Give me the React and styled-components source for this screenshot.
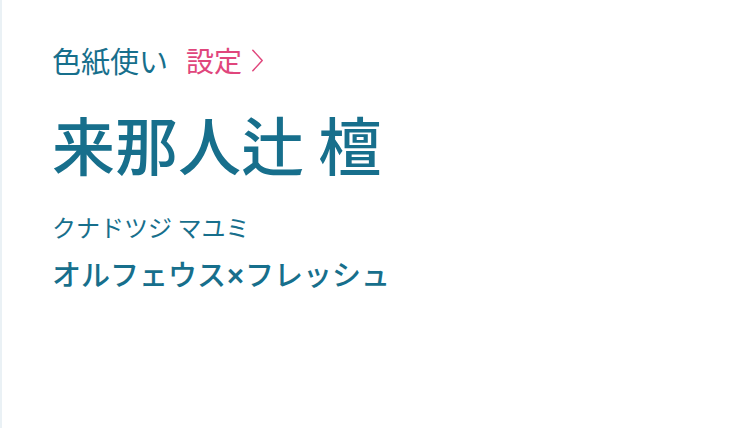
import styled, { createGlobalStyle } from "styled-components";

const GlobalStyle = createGlobalStyle`
  html, body {
    margin: 0;
    padding: 0;
    background: #ffffff;
  }
  body {
    font-family: "Noto Sans CJK JP", "Noto Sans", sans-serif;
  }
`;

const TEAL = "#176f8c";
const PINK = "#e0467c";

export default function App() {
  return (
    <>
      <GlobalStyle />
      <Page>
        <Panel>
          <TopRow>
            <Label>色紙使い</Label>
            <SettingsLink href="#">
              設定
              <Chevron viewBox="0 0 16 26">
                <path d="M3 2 L13 13 L3 24" />
              </Chevron>
            </SettingsLink>
          </TopRow>
          <Name>来那人辻 檀</Name>
          <Kana>クナドツジ マユミ</Kana>
          <Unit>
            オルフェウス<Times>×</Times>フレッシュ
          </Unit>
        </Panel>
      </Page>
    </>
  );
}

const Page = styled.div`
  width: 740px;
  height: 428px;
  box-sizing: border-box;
  border-left: 2px solid #eaf1f5;
  background: #ffffff;
`;

const Panel = styled.div`
  display: flex;
  flex-direction: column;
  align-items: flex-start;
  padding: 40px 0 0 50px;
  color: ${TEAL};
`;

const TopRow = styled.div`
  display: flex;
  align-items: center;
  gap: 18px;
  height: 40px;
`;

const Label = styled.span`
  font-size: 29px;
  font-weight: 400;
  line-height: 1;
`;

const SettingsLink = styled.a`
  display: flex;
  align-items: center;
  gap: 8px;
  color: ${PINK};
  text-decoration: none;
  font-size: 28px;
  font-weight: 400;
  line-height: 1;
`;

const Chevron = styled.svg`
  width: 15px;
  height: 25px;
  fill: none;
  stroke: ${PINK};
  stroke-width: 1.6;
  stroke-linecap: round;
  stroke-linejoin: round;
`;

const Name = styled.h1`
  margin: 31px 0 0;
  font-size: 63px;
  font-weight: 500;
  line-height: 1;
`;

const Kana = styled.div`
  margin-top: 41px;
  font-size: 24px;
  font-weight: 400;
  line-height: 1;
`;

const Unit = styled.div`
  margin-top: 20px;
  font-size: 29px;
  font-weight: 500;
  line-height: 1;
`;

const Times = styled.span`
  font-family: "Liberation Sans", sans-serif;
  font-weight: 700;
  margin: 0 1px;
`;
